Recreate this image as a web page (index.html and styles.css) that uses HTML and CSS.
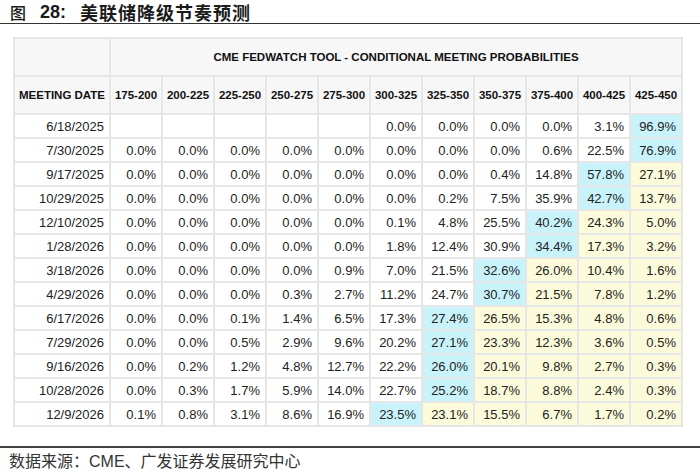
FILE: index.html
```html
<!DOCTYPE html>
<html lang="zh">
<head>
<meta charset="utf-8">
<link rel="stylesheet" href="styles.css">
</head>
<body>
<div class="title"><span class="fig">图</span><span class="num">28:</span><span class="cn">美联储降级节奏预测</span></div>
<div class="tablewrap">
<table class="fw">
<tr class="h1"><th></th><th colspan="11">CME FEDWATCH TOOL - CONDITIONAL MEETING PROBABILITIES</th></tr>
<tr class="h2"><th>MEETING DATE</th><th>175-200</th><th>200-225</th><th>225-250</th><th>250-275</th><th>275-300</th><th>300-325</th><th>325-350</th><th>350-375</th><th>375-400</th><th>400-425</th><th>425-450</th></tr>
<tr><td>6/18/2025</td><td></td><td></td><td></td><td></td><td></td><td>0.0%</td><td>0.0%</td><td>0.0%</td><td>0.0%</td><td>3.1%</td><td class="c">96.9%</td></tr>
<tr><td>7/30/2025</td><td>0.0%</td><td>0.0%</td><td>0.0%</td><td>0.0%</td><td>0.0%</td><td>0.0%</td><td>0.0%</td><td>0.0%</td><td>0.6%</td><td>22.5%</td><td class="c">76.9%</td></tr>
<tr><td>9/17/2025</td><td>0.0%</td><td>0.0%</td><td>0.0%</td><td>0.0%</td><td>0.0%</td><td>0.0%</td><td>0.0%</td><td>0.4%</td><td>14.8%</td><td class="c">57.8%</td><td class="y">27.1%</td></tr>
<tr><td>10/29/2025</td><td>0.0%</td><td>0.0%</td><td>0.0%</td><td>0.0%</td><td>0.0%</td><td>0.0%</td><td>0.2%</td><td>7.5%</td><td>35.9%</td><td class="c">42.7%</td><td class="y">13.7%</td></tr>
<tr><td>12/10/2025</td><td>0.0%</td><td>0.0%</td><td>0.0%</td><td>0.0%</td><td>0.0%</td><td>0.1%</td><td>4.8%</td><td>25.5%</td><td class="c">40.2%</td><td class="y">24.3%</td><td class="y">5.0%</td></tr>
<tr><td>1/28/2026</td><td>0.0%</td><td>0.0%</td><td>0.0%</td><td>0.0%</td><td>0.0%</td><td>1.8%</td><td>12.4%</td><td>30.9%</td><td class="c">34.4%</td><td class="y">17.3%</td><td class="y">3.2%</td></tr>
<tr><td>3/18/2026</td><td>0.0%</td><td>0.0%</td><td>0.0%</td><td>0.0%</td><td>0.9%</td><td>7.0%</td><td>21.5%</td><td class="c">32.6%</td><td class="y">26.0%</td><td class="y">10.4%</td><td class="y">1.6%</td></tr>
<tr><td>4/29/2026</td><td>0.0%</td><td>0.0%</td><td>0.0%</td><td>0.3%</td><td>2.7%</td><td>11.2%</td><td>24.7%</td><td class="c">30.7%</td><td class="y">21.5%</td><td class="y">7.8%</td><td class="y">1.2%</td></tr>
<tr><td>6/17/2026</td><td>0.0%</td><td>0.0%</td><td>0.1%</td><td>1.4%</td><td>6.5%</td><td>17.3%</td><td class="c">27.4%</td><td class="y">26.5%</td><td class="y">15.3%</td><td class="y">4.8%</td><td class="y">0.6%</td></tr>
<tr><td>7/29/2026</td><td>0.0%</td><td>0.0%</td><td>0.5%</td><td>2.9%</td><td>9.6%</td><td>20.2%</td><td class="c">27.1%</td><td class="y">23.3%</td><td class="y">12.3%</td><td class="y">3.6%</td><td class="y">0.5%</td></tr>
<tr><td>9/16/2026</td><td>0.0%</td><td>0.2%</td><td>1.2%</td><td>4.8%</td><td>12.7%</td><td>22.2%</td><td class="c">26.0%</td><td class="y">20.1%</td><td class="y">9.8%</td><td class="y">2.7%</td><td class="y">0.3%</td></tr>
<tr><td>10/28/2026</td><td>0.0%</td><td>0.3%</td><td>1.7%</td><td>5.9%</td><td>14.0%</td><td>22.7%</td><td class="c">25.2%</td><td class="y">18.7%</td><td class="y">8.8%</td><td class="y">2.4%</td><td class="y">0.3%</td></tr>
<tr><td>12/9/2026</td><td>0.1%</td><td>0.8%</td><td>3.1%</td><td>8.6%</td><td>16.9%</td><td class="c">23.5%</td><td class="y">23.1%</td><td class="y">15.5%</td><td class="y">6.7%</td><td class="y">1.7%</td><td class="y">0.2%</td></tr>
</table>
</div>
<div class="source"><span class="cn">数据来源：</span>CME<span class="cn">、广发证券发展研究中心</span></div>
</body>
</html>
```

FILE: styles.css
```css
html, body {
  margin: 0;
  padding: 0;
  background: #ffffff;
}
body {
  width: 700px;
  height: 473px;
  overflow: hidden;
  font-family: "Liberation Sans", Arial, "Noto Sans CJK SC", sans-serif;
  color: #222;
}
.title {
  display: flex;
  align-items: center;
  height: 24px;
  padding-left: 10px;
  font-size: 18px;
  line-height: 24px;
  font-weight: bold;
  color: #1a1a1a;
  border-bottom: 1.5px solid #333;
  white-space: nowrap;
  box-sizing: border-box;
}
.title .fig {
  font-family: "Noto Sans CJK SC", sans-serif;
  font-weight: 500;
  font-size: 16px;
  margin-right: 14px;
}
.title .num {
  font-family: "Liberation Sans", sans-serif;
  font-weight: bold;
  margin-right: 14px;
}
.title .cn {
  font-family: "Noto Sans CJK SC", sans-serif;
  font-weight: bold;
  letter-spacing: 1px;
}
.tablewrap {
  padding: 13px 0 0 13px;
  border-bottom: 2px solid #444;
  box-sizing: border-box;
  height: 424px;
}
.fw {
  border-collapse: collapse;
  table-layout: fixed;
  width: 670px;
  border: 2px solid #e6e6e6;
}
.fw th, .fw td {
  border: 2px solid #e6e6e6;
  padding: 0 5px 0 0;
  white-space: nowrap;
  overflow: hidden;
}
.fw th {
  background: #f7f7f7;
  font-size: 11.5px;
  font-weight: bold;
  color: #111;
  text-align: center;
  padding: 0;
}
.fw tr.h1 th {
  height: 36px;
}
.fw tr.h2 th {
  height: 36px;
}
.fw tr.h1 th:first-child,
.fw tr.h2 th:first-child {
  width: 94px;
}
.fw td {
  height: 22px;
  font-size: 13px;
  text-align: right;
  color: #222;
  background: #fff;
}
.fw td.c {
  background: #c9f3fb;
}
.fw td.y {
  background: #fbfbdc;
}
.source {
  padding: 3px 0 0 9px;
  font-size: 16px;
  line-height: 19px;
  color: #333;
}
.source .cn {
  font-family: "Noto Sans CJK SC", sans-serif;
}
```
